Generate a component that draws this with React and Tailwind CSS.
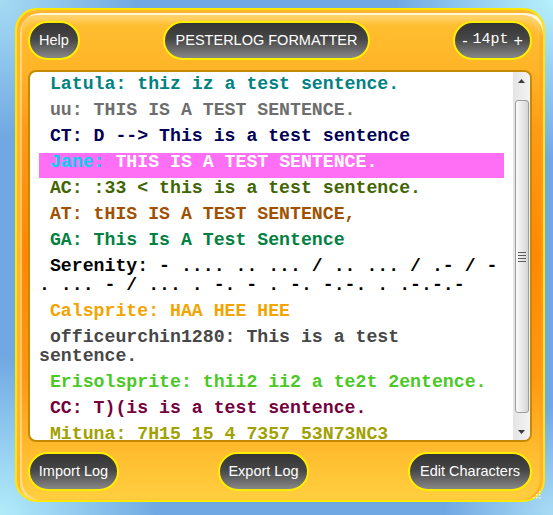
import React from 'react'

const LOG = [
  { name: 'Latula', text: 'thiz iz a test sentence.', color: 'text-[#008282]' },
  { name: 'uu', text: 'THIS IS A TEST SENTENCE.', color: 'text-[#6e6e6e]' },
  { name: 'CT', text: 'D --> This is a test sentence', color: 'text-[#000056]' },
  { name: 'Jane', text: 'THIS IS A TEST SENTENCE.', jane: true },
  { name: 'AC', text: ':33 < this is a test sentence.', color: 'text-[#416600]' },
  { name: 'AT', text: 'tHIS IS A TEST SENTENCE,', color: 'text-[#a15000]' },
  { name: 'GA', text: 'This Is A Test Sentence', color: 'text-[#008141]' },
  {
    name: 'Serenity',
    text: '- .... .. ... / .. ... / .- / - . ... - / ... . -. - . -. -.-. . .-.-.-',
    color: 'text-black',
  },
  { name: 'Calsprite', text: 'HAA HEE HEE', color: 'text-[#f2a400]' },
  { name: 'officeurchin1280', text: 'This is a test sentence.', color: 'text-[#474747]' },
  { name: 'Erisolsprite', text: 'thii2 ii2 a te2t 2entence.', color: 'text-[#4ac925]' },
  { name: 'CC', text: 'T)(is is a test sentence.', color: 'text-[#77003c]' },
  { name: 'Mituna', text: '7H15 15 4 7357 53N73NC3', color: 'text-[#a1a100]' },
]

function Pill({ className = '', children }) {
  return (
    <button
      className={`h-[39px] flex items-center justify-center rounded-full border-2 border-[#ffee00] bg-[linear-gradient(to_bottom,#343434_0%,#464646_45%,#878787_100%)] text-white text-[14.5px] font-['Liberation_Sans',Arial,sans-serif] ${className}`}
    >
      {children}
    </button>
  )
}

function LogLine({ line }) {
  if (line.jane) {
    return (
      <p className="whitespace-pre-wrap pb-[6px] mb-[1px] bg-[#ff6ff6] text-white">
        <span className="text-[#00d5f2]">{' ' + line.name + ':'}</span>
        {' ' + line.text}
      </p>
    )
  }
  return (
    <p className={`whitespace-pre-wrap pb-[6px] mb-[1px] ${line.color}`}>
      {' ' + line.name + ': ' + line.text}
    </p>
  )
}

function Scrollbar() {
  return (
    <div className="w-[17px] shrink-0 flex flex-col bg-[linear-gradient(to_right,#e4e4e4,#f3f3f3)]">
      <div className="h-[17px] flex items-center justify-center">
        <svg width="7" height="4" viewBox="0 0 7 4">
          <polygon points="3.5,0 7,4 0,4" fill="#3c3c3c" />
        </svg>
      </div>
      <div className="flex-1">
        <div className="mt-[11px] ml-[2px] w-[14px] h-[313px] rounded-[3px] border border-[#9c9c9c] bg-[linear-gradient(to_right,#fafafa,#e9e9e9_50%,#d4d4d4)] flex items-center justify-center">
          <div className="flex flex-col gap-[2px] w-[8px]">
            <div className="h-px bg-[#5c5c5c]" />
            <div className="h-px bg-[#5c5c5c]" />
            <div className="h-px bg-[#5c5c5c]" />
            <div className="h-px bg-[#5c5c5c]" />
          </div>
        </div>
      </div>
      <div className="h-[17px] flex items-center justify-center">
        <svg width="7" height="4" viewBox="0 0 7 4">
          <polygon points="0,0 7,0 3.5,4" fill="#3c3c3c" />
        </svg>
      </div>
    </div>
  )
}

export default function App() {
  return (
    <div className="w-[553px] h-[515px] overflow-hidden pt-[8px] pl-[15px] bg-[#6fa8e2] bg-[radial-gradient(circle_at_0%_0%,#a6dbf3_0px,rgba(166,219,243,0)_140px),radial-gradient(circle_at_100%_0%,#b6f0fc_0px,rgba(182,240,252,0)_160px),radial-gradient(circle_at_0%_100%,#b2ecfa_0px,rgba(178,236,250,0)_160px),radial-gradient(circle_at_100%_100%,#a8dcf5_0px,rgba(168,220,245,0)_110px)]">
      <div className="relative w-[530px] h-[494px] rounded-[22px] border-2 border-[#ffe800] bg-[linear-gradient(to_bottom,#ffc232_0%,#ffb427_12%,#ff9a14_25%,#ff8800_50%,#ff9810_75%,#ffbc2e_90%,#ffcf40_100%)] shadow-[inset_3px_3px_0_#ffb52c,inset_0_5px_0_rgba(255,248,225,0.95),inset_5px_0_0_rgba(255,235,190,0.55),inset_0_11px_6px_rgba(255,232,170,0.5),inset_-3px_0_2px_rgba(255,110,0,0.35)] flex flex-col px-[11px] pt-[11px] pb-[9px]">
        {/* header */}
        <div className="flex justify-between">
          <Pill className="w-[52px]">Help</Pill>
          <Pill className="w-[207px]">PESTERLOG FORMATTER</Pill>
          <Pill className="w-[79px] gap-[5px]">
            <span className="text-[16px]">-</span>
            <span className="font-['Liberation_Mono',monospace] text-[15px]">14pt</span>
            <span className="text-[16px]">+</span>
          </Pill>
        </div>

        {/* log box */}
        <div className="mt-[10px] h-[372px] flex rounded-[8px] border-2 border-[#c58a05] bg-white overflow-hidden">
          <div className="flex-1 overflow-hidden pl-[9px] pr-[9px] pt-[3px] font-['Liberation_Mono','Courier_New',monospace] font-bold text-[18.2px] leading-[19px]">
            {LOG.map((line, i) => (
              <LogLine key={i} line={line} />
            ))}
          </div>
          <Scrollbar />
        </div>

        {/* footer */}
        <div className="mt-[10px] flex justify-between">
          <Pill className="w-[91px]">Import Log</Pill>
          <Pill className="w-[91px]">Export Log</Pill>
          <Pill className="w-[124px]">Edit Characters</Pill>
        </div>

        <svg className="absolute right-[2px] bottom-[1px]" width="9" height="9" viewBox="0 0 9 9">
          <rect x="7" y="1" width="1.5" height="1.5" fill="#f4f4f4" />
          <rect x="4" y="4" width="1.5" height="1.5" fill="#f4f4f4" />
          <rect x="7" y="4" width="1.5" height="1.5" fill="#f4f4f4" />
          <rect x="1" y="7" width="1.5" height="1.5" fill="#f4f4f4" />
          <rect x="4" y="7" width="1.5" height="1.5" fill="#f4f4f4" />
          <rect x="7" y="7" width="1.5" height="1.5" fill="#f4f4f4" />
        </svg>
      </div>
    </div>
  )
}
